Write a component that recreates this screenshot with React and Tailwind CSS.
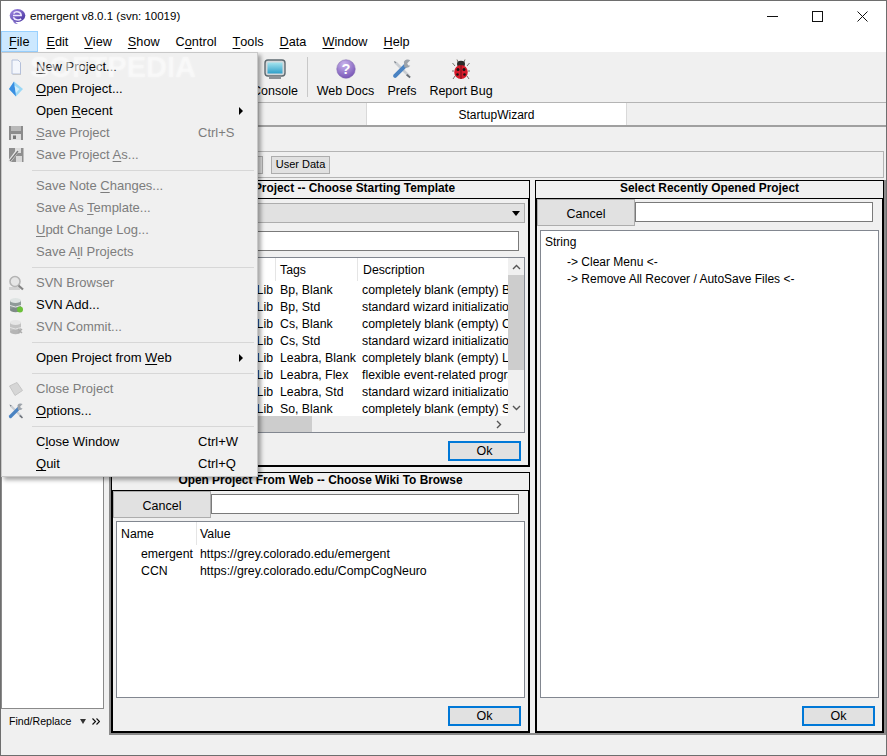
import React from 'react';

const MENUBAR = ['&File', '&Edit', '&View', '&Show', 'C&ontrol', '&Tools', '&Data', '&Window', '&Help'];

const ROWS = [
  ['Bp, Blank', 'completely blank (empty) Bp project'],
  ['Bp, Std', 'standard wizard initialization for Bp'],
  ['Cs, Blank', 'completely blank (empty) Cs project'],
  ['Cs, Std', 'standard wizard initialization for Cs'],
  ['Leabra, Blank', 'completely blank (empty) Leabra project'],
  ['Leabra, Flex', 'flexible event-related programming'],
  ['Leabra, Std', 'standard wizard initialization for Leabra'],
  ['So, Blank', 'completely blank (empty) So project'],
];

// splits "&File" into File with an underlined F, like a Qt action label
function Mn({ label }) {
  const i = label.indexOf('&');
  if (i < 0) return <>{label}</>;
  return (
    <>
      {label.slice(0, i)}
      <u className="underline-offset-2">{label[i + 1]}</u>
      {label.slice(i + 2)}
    </>
  );
}

const PageIcon = () => (
  <svg width="16" height="16" viewBox="0 0 16 16">
    <path d="M4 1 H10 L12.5 3.5 V15 H4 Z" fill="#f3f6fc" stroke="#b4c0da" />
    <path d="M5 15.5 H13" stroke="#c9c9c9" />
  </svg>
);

const ClosedPageIcon = () => (
  <svg width="16" height="16" viewBox="0 0 16 16">
    <path d="M1.5 5 L9 1.5 L14.5 9.5 L7 14.5 Z" fill="#d6d6d6" stroke="#c6c6c6" />
  </svg>
);

const DiamondIcon = () => (
  <svg width="16" height="16" viewBox="0 0 16 16">
    <path d="M6 0.5 L15 8 L8 15.5 L1 8 Z" fill="#9bd8f6" />
    <path d="M6 0.5 L8 15.5 L1 8 Z" fill="#3a8fe2" />
    <path d="M6.5 4.5 L11.5 8 L8 12 Z" fill="#d3eefc" />
  </svg>
);

const FloppyIcon = () => (
  <svg width="16" height="16" viewBox="0 0 16 16">
    <path d="M1 1 H15 V15 H1 Z" fill="#8c8c8c" />
    <rect x="3" y="1" width="10" height="5" fill="#b9b9b9" />
    <rect x="3" y="9" width="10" height="6" fill="#dedede" />
    <rect x="5" y="10.5" width="3" height="3.5" fill="#777" />
  </svg>
);

const FloppyPenIcon = () => (
  <svg width="16" height="16" viewBox="0 0 16 16">
    <path d="M1 1 H15.5 V15 H1 Z" fill="#8f8f8f" />
    <rect x="7" y="1" width="6" height="5" fill="#dcdcdc" />
    <rect x="8" y="9" width="6" height="6" fill="#d9d9d9" />
    <path d="M1 15 L10 3" stroke="#e8e8e8" strokeWidth="3" />
    <path d="M2 14 L10 4" stroke="#7a7a7a" strokeWidth="1.4" />
  </svg>
);

const LensIcon = () => (
  <svg width="16" height="16" viewBox="0 0 16 16">
    <path d="M1 12 H12 V15 H1 Z" fill="#d2d2d2" />
    <circle cx="7" cy="6.5" r="5" fill="#e6e6e6" stroke="#b4b4b4" strokeWidth="1.6" />
    <path d="M10.5 10.5 L15 14.5" stroke="#858585" strokeWidth="2.2" />
  </svg>
);

const DbIcon = ({ add }) => (
  <svg width="16" height="16" viewBox="0 0 16 16">
    <rect x="2" y="3" width="11" height="10" fill={add ? '#8f9a98' : '#c2c2c2'} />
    <ellipse cx="7.5" cy="13" rx="5.5" ry="2.2" fill={add ? '#7f8a88' : '#b5b5b5'} />
    <path d="M2 8.5 Q7.5 11.5 13 8.5" fill="none" stroke="#e4e4e4" />
    <ellipse cx="7.5" cy="3.5" rx="5.5" ry="2.5" fill={add ? '#dfe4e3' : '#e6e6e6'} />
    {add ? <circle cx="12" cy="12.5" r="3" fill="#6cc13a" /> : <path d="M10 10 L14 14 M14 10 L10 14" stroke="#adadad" strokeWidth="1.4" />}
  </svg>
);

// wrench crossed with a screwdriver, used by the menu and the toolbar at two sizes
const ToolsIcon = ({ size = 16 }) => (
  <svg width={size} height={size} viewBox="0 0 16 16">
    <path d="M1.5 1.5 L4 2.5 L3.5 3.5 L2.5 4 Z" fill="#7c828a" />
    <path d="M3 3 L13.5 13.5" stroke="#c9cdd2" strokeWidth="2.2" />
    <path d="M2.5 13.5 L10.5 5.5" stroke="#4a83c2" strokeWidth="3.2" strokeLinecap="round" />
    <path d="M9.5 2.2 A3.6 3.6 0 0 1 14.6 1 L12.2 3.4 L12.8 5 L14.6 5.4 A3.6 3.6 0 0 1 9.8 6.4 Z" fill="#9ea4ab" />
    <path d="M12.2 12 L15 14.2 L14 15.4 L11.2 13 Z" fill="#696e75" />
  </svg>
);

const MENU = [
  { label: '&New Project...', icon: <PageIcon /> },
  { label: '&Open Project...', icon: <DiamondIcon /> },
  { label: 'Open &Recent', arrow: true },
  { label: '&Save Project', off: true, key: 'Ctrl+S', icon: <FloppyIcon /> },
  { label: 'Save Project &As...', off: true, icon: <FloppyPenIcon /> },
  null,
  { label: 'Save Note &Changes...', off: true },
  { label: 'Save As &Template...', off: true },
  { label: '&Updt Change Log...', off: true },
  { label: 'Save A&ll Projects', off: true },
  null,
  { label: 'SVN Browser', off: true, icon: <LensIcon /> },
  { label: 'SVN Add...', icon: <DbIcon add /> },
  { label: 'SVN Commit...', off: true, icon: <DbIcon /> },
  null,
  { label: 'Open Project from &Web', arrow: true },
  null,
  { label: 'Close Project', off: true, icon: <ClosedPageIcon /> },
  { label: '&Options...', icon: <ToolsIcon /> },
  null,
  { label: 'C&lose Window', key: 'Ctrl+W' },
  { label: '&Quit', key: 'Ctrl+Q' },
];

function FileMenu() {
  return (
    <div className="absolute left-0 top-[51px] w-[257px] h-[425px] z-20 bg-[#f0f0f0] border border-[#c8c8c8] shadow-[3px_3px_4px_rgba(0,0,0,0.35)] pt-[3px] overflow-hidden text-[13px]">
      {MENU.map((m, i) =>
        m === null ? (
          <div key={i} className="h-[9px] pl-[30px] pr-[3px] flex items-center">
            <div className="h-px w-full bg-[#d7d7d7]" />
          </div>
        ) : (
          <div key={i} className={`h-[22px] flex items-center ${m.off ? 'text-[#7d7d7d]' : 'text-black'}`}>
            <span className="w-[27px] mr-[7px] flex items-center justify-center">{m.icon}</span>
            <span className="w-[162px] whitespace-nowrap"><Mn label={m.label} /></span>
            <span className="w-[44px] whitespace-nowrap">{m.key}</span>
            {m.arrow && <span className="ml-[-3px] w-0 h-0 border-y-[4px] border-y-transparent border-l-[4px] border-l-black" />}
          </div>
        )
      )}
      <div className="absolute left-[28px] top-[-7px] font-bold text-[29px] text-white/35 [text-shadow:0_0_3px_rgba(255,255,255,0.45)] select-none">SOFTPEDIA</div>
    </div>
  );
}

function ToolButton({ icon, label, width, className = '' }) {
  return (
    <div className={`flex flex-col items-center h-[48px] pt-[5px] text-[12.5px] ${className}`} style={{ width }}>
      <div className="h-[25px] flex items-center justify-center">{icon}</div>
      <div className="whitespace-nowrap mt-[2px]">{label}</div>
    </div>
  );
}

const ConsoleIcon = () => (
  <svg width="22" height="21" viewBox="0 0 22 21">
    <defs>
      <linearGradient id="scr" x1="0" y1="0" x2="0" y2="1">
        <stop offset="0" stopColor="#a4e4ee" />
        <stop offset="1" stopColor="#2f9fc9" />
      </linearGradient>
    </defs>
    <rect x="1" y="1" width="20" height="16" rx="3" fill="#d4d8db" stroke="#5e6a70" strokeWidth="1.4" />
    <rect x="3.5" y="3.5" width="15" height="11" fill="url(#scr)" />
    <rect x="5" y="17" width="12" height="3" fill="#8c9297" />
  </svg>
);

const HelpIcon = () => (
  <svg width="20" height="20" viewBox="0 0 22 22">
    <defs>
      <radialGradient id="hlp" cx="0.4" cy="0.25" r="0.9">
        <stop offset="0" stopColor="#c9b4ec" />
        <stop offset="1" stopColor="#6a45ad" />
      </radialGradient>
    </defs>
    <circle cx="11" cy="11" r="10.2" fill="url(#hlp)" stroke="#7f68ad" strokeWidth="0.6" />
    <text x="11" y="16.5" textAnchor="middle" fontSize="16" fontWeight="700" fill="#fff" fontFamily="Liberation Sans, sans-serif">?</text>
  </svg>
);

const BugIcon = () => (
  <svg width="18" height="21" viewBox="0 0 18 21">
    <path d="M3 7 L0.5 4 M15 7 L17.5 4 M2 12 H0 M16 12 H18 M3 17 L1 20 M15 17 L17 20 M6 3 L5 0.5 M12 3 L13 0.5" stroke="#77736e" strokeWidth="1" />
    <ellipse cx="9" cy="5" rx="4" ry="3.2" fill="#2c2a28" />
    <ellipse cx="9" cy="13" rx="6.8" ry="7" fill="#d71a2a" />
    <path d="M9 6 V20" stroke="#5c0f14" strokeWidth="0.8" />
    <circle cx="6" cy="10.5" r="1.5" fill="#1a1414" />
    <circle cx="12" cy="10.5" r="1.5" fill="#1a1414" />
    <circle cx="5.5" cy="15.5" r="1.3" fill="#1a1414" />
    <circle cx="12.5" cy="15.5" r="1.3" fill="#1a1414" />
  </svg>
);

const Logo = () => (
  <svg width="18" height="17" viewBox="0 0 18 17">
    <defs>
      <linearGradient id="lg" x1="0" y1="0" x2="1" y2="1">
        <stop offset="0" stopColor="#a68de6" />
        <stop offset="1" stopColor="#3f2c9a" />
      </linearGradient>
    </defs>
    <path d="M5 13 Q6 16.5 10 16 Q7.5 15 7.5 13 Z" fill="#8d7ad0" />
    <ellipse cx="9.5" cy="7.5" rx="7.8" ry="6.5" fill="url(#lg)" />
    <path d="M5 7.5 H13.2 A4.2 3.6 0 0 0 5.6 5.4" fill="none" stroke="#efeafd" strokeWidth="1.5" />
    <path d="M5.4 9.2 A4.6 3.6 0 0 0 13.2 10.8" fill="none" stroke="#efeafd" strokeWidth="1.5" />
  </svg>
);

function Button({ children, primary, className = '' }) {
  return (
    <div className={`flex items-center justify-center bg-[#e1e1e1] ${primary ? 'border-2 border-[#0078d7]' : 'border border-[#adadad]'} ${className}`}>
      {children}
    </div>
  );
}

const Input = ({ className = '' }) => <div className={`bg-white border border-[#7a7a7a] h-[20px] ${className}`} />;

function Panel({ title, className = '', children }) {
  return (
    <div className={`flex flex-col border border-black ${className}`}>
      <div className="h-[17px] leading-[15px] text-center font-bold text-[11.9px] whitespace-nowrap overflow-hidden">{title}</div>
      <div className="flex-1 min-h-0 border border-black flex flex-col">{children}</div>
    </div>
  );
}

function HeaderCell({ children, className = '' }) {
  return <div className={`h-[23px] shrink-0 flex items-center border-r border-[#e5e5e5] pl-[4px] pt-[2px] ${className}`}>{children}</div>;
}

function TemplateTable() {
  return (
    <div className="mt-[6px] mx-[3px] h-[176px] border border-[#828790] bg-white flex flex-col">
      <div className="flex-1 min-h-0 flex">
        <div className="flex-1 min-w-0 overflow-hidden">
          <div className="flex">
            <HeaderCell className="w-[159px]">Location</HeaderCell>
            <HeaderCell className="w-[82px]">Tags</HeaderCell>
            <div className="h-[23px] flex items-center pl-[5px] pt-[2px]">Description</div>
          </div>
          {ROWS.map(([tag, desc]) => (
            <div key={tag} className="flex h-[17px] items-center whitespace-nowrap pt-[2px]">
              <div className="w-[159px] shrink-0 text-right pr-[3px]">Lib</div>
              <div className="w-[82px] shrink-0 pl-[4px]">{tag}</div>
              <div className="pl-[4px] shrink-0">{desc}</div>
            </div>
          ))}
        </div>
        <div className="w-[16px] shrink-0 bg-[#f0f0f0] flex flex-col items-center">
          <svg className="mt-[6px] mb-[5px]" width="9" height="6" viewBox="0 0 9 6"><path d="M1 5 L4.5 1.5 L8 5" fill="none" stroke="#555" strokeWidth="1.4" /></svg>
          <div className="w-full h-[95px] bg-[#cdcdcd]" />
          <svg className="mt-auto mb-[5px]" width="9" height="6" viewBox="0 0 9 6"><path d="M1 1 L4.5 4.5 L8 1" fill="none" stroke="#555" strokeWidth="1.4" /></svg>
        </div>
      </div>
      <div className="h-[16px] shrink-0 bg-[#f0f0f0] flex items-center">
        <div className="w-[195px] h-full bg-[#cdcdcd]" />
        <svg className="ml-auto mr-[22px]" width="6" height="9" viewBox="0 0 6 9"><path d="M1 1 L4.5 4.5 L1 8" fill="none" stroke="#555" strokeWidth="1.4" /></svg>
      </div>
    </div>
  );
}

function OkRow({ className = '' }) {
  return (
    <div className={`flex justify-end mt-[8px] mr-[7px] ${className}`}>
      <Button primary className="w-[73px] h-[20px] text-[12.5px] pt-px">Ok</Button>
    </div>
  );
}

export default function App() {
  return (
    <div className="relative w-[887px] h-[756px] overflow-hidden bg-[#f0f0f0] border border-[#6e6e6e] font-['Liberation_Sans',Arial,sans-serif] text-[12.3px] text-black flex flex-col">
      {/* title bar */}
      <div className="h-[30px] bg-white flex items-center shrink-0">
        <div className="ml-[7px] mr-[4px] flex"><Logo /></div>
        <div className="text-[11.5px] pt-px">emergent v8.0.1 (svn: 10019)</div>
        <div className="ml-auto flex items-center mr-[18px] gap-[34px]">
          <svg width="11" height="11" viewBox="0 0 11 11"><path d="M0 5.5 H11" stroke="#111" /></svg>
          <svg width="11" height="11" viewBox="0 0 11 11"><rect x="0.5" y="0.5" width="10" height="10" fill="none" stroke="#111" /></svg>
          <svg width="11" height="11" viewBox="0 0 11 11"><path d="M0.5 0.5 L10.5 10.5 M10.5 0.5 L0.5 10.5" stroke="#111" /></svg>
        </div>
      </div>

      {/* menu bar */}
      <div className="h-[22px] bg-white border-b border-[#f0f0f0] flex shrink-0 text-[12.7px]">
        {MENUBAR.map((m, i) => (
          <div key={m} className={`flex items-center pt-[2px] ${i === 0 ? 'bg-[#cce8ff] border border-[#99d1ff] pl-[7px] pr-[8px]' : 'px-[8px]'}`}>
            <Mn label={m} />
          </div>
        ))}
      </div>

      {/* toolbar */}
      <div className="h-[50px] shrink-0 flex border-b border-[#b4b4b4] pl-[251px]">
        <ToolButton width={46} className="mr-[9px]" icon={<ConsoleIcon />} label="Console" />
        <div className="w-px h-[40px] my-[4px] bg-[#c8c8c8]" />
        <ToolButton width={75} icon={<HelpIcon />} label="Web Docs" />
        <ToolButton width={38} icon={<ToolsIcon size={20} />} label="Prefs" />
        <ToolButton width={80} icon={<BugIcon />} label="Report Bug" />
      </div>

      {/* tabs */}
      <div className="h-[24px] shrink-0 flex border-b-2 border-[#a0a0a0] pl-[257px]">
        <div className="w-[108px] border-l border-[#d9d9d9]" />
        <div className="w-[261px] bg-white border-r border-[#c8c8c8] border-l border-[#d9d9d9] flex items-center justify-center text-[12px] pt-px">StartupWizard</div>
      </div>

      <div className="flex-1 min-h-0 flex">
        {/* find pane */}
        <div className="w-[108px] shrink-0 flex flex-col">
          <div className="w-[103px] flex-1 bg-white border border-t-0 border-[#8a8a8a]" />
          <div className="h-[25px] flex items-center pl-[8px] text-[10.6px] whitespace-nowrap">
            Find/Replace
            <span className="ml-[9px] w-0 h-0 border-x-[3.5px] border-x-transparent border-t-[5px] border-t-[#333]" />
            <svg className="ml-[6px]" width="8" height="7" viewBox="0 0 8 7"><path d="M0.5 0.5 L3.5 3.5 L0.5 6.5 M4.5 0.5 L7.5 3.5 L4.5 6.5" fill="none" stroke="#111" strokeWidth="1.2" /></svg>
          </div>
          <div className="h-[21px]" />
        </div>

        {/* wizard body */}
        <div className="flex-1 min-w-0 flex flex-col">
          <div className="h-[24px] shrink-0" />
          <div className="h-[27px] shrink-0 mr-[2px] flex items-center gap-[8px] border border-[#b4b4b4] pl-[93px] text-[11px]">
            <div className="w-[60px] h-[18px] bg-[#e1e1e1] border border-[#adadad]" />
            <div className="flex items-center justify-center w-[59px] h-[18px] bg-[#e1e1e1] border border-[#adadad]">User Data</div>
          </div>

          <div className="h-[555px] shrink-0 flex mt-[2px] gap-[5px] border-x-2 border-b-2 border-[#8a8a8a]">
            <div className="w-[419px] flex flex-col gap-[5px]">
              <Panel title="Create New Project -- Choose Starting Template" className="h-[287px]">
                <div className="mt-[4px] mx-[3px] h-[20px] bg-[#e1e1e1] border border-[#adadad] flex items-center justify-end pr-[4px]">
                  <span className="w-0 h-0 border-x-[4px] border-x-transparent border-t-[5px] border-t-black" />
                </div>
                <Input className="mt-[8px] ml-[100px] mr-[9px]" />
                <TemplateTable />
                <OkRow />
              </Panel>
              <Panel title="Open Project From Web -- Choose Wiki To Browse" className="flex-1 min-h-0">
                <div className="flex items-start h-[30px]">
                  <Button className="w-[98px] h-[27px] shrink-0 text-[12.5px] pt-[3px]">Cancel</Button>
                  <Input className="flex-1 mt-[3px] mr-[9px]" />
                </div>
                <div className="mx-[3px] h-[177px] border border-[#828790] bg-white">
                  <div className="flex">
                    <HeaderCell className="w-[80px]">Name</HeaderCell>
                    <div className="h-[23px] flex items-center pl-[3px] pt-[2px]">Value</div>
                  </div>
                  <div className="flex h-[17px] items-center pt-[2px]"><div className="w-[80px] pl-[24px]">emergent</div><div className="pl-[3px]">https://grey.colorado.edu/emergent</div></div>
                  <div className="flex h-[17px] items-center pt-[2px]"><div className="w-[80px] pl-[24px]">CCN</div><div className="pl-[3px]">https://grey.colorado.edu/CompCogNeuro</div></div>
                </div>
                <OkRow />
              </Panel>
            </div>

            <Panel title="Select Recently Opened Project" className="flex-1 min-w-0">
              <div className="flex items-start h-[31px]">
                <Button className="w-[98px] h-[27px] shrink-0 text-[12.5px] pt-[3px]">Cancel</Button>
                <Input className="flex-1 mt-[3px] mr-[9px]" />
              </div>
              <div className="mx-[3px] h-[468px] border border-[#828790] bg-white pl-[4px] text-[12px]">
                <div className="h-[22px] flex items-center">String</div>
                <div className="pl-[22px]">
                  <div className="h-[17px] flex items-center">-&gt; Clear Menu &lt;-</div>
                  <div className="h-[17px] flex items-center">-&gt; Remove All Recover / AutoSave Files &lt;-</div>
                </div>
              </div>
              <OkRow />
            </Panel>
          </div>
        </div>
      </div>

      <FileMenu />
    </div>
  );
}
